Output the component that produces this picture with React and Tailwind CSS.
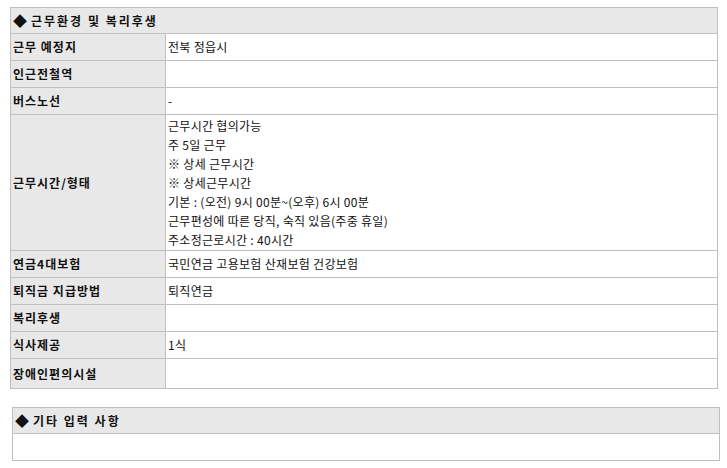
const rows = [
  { label: '근무 예정지', value: '전북 정읍시' },
  { label: '인근전철역', value: '' },
  { label: '버스노선', value: '-' },
  {
    label: '근무시간/형태',
    lines: [
      '근무시간 협의가능',
      '주 5일 근무',
      '※ 상세 근무시간',
      '※ 상세근무시간',
      '기본 : (오전) 9시 00분~(오후) 6시 00분',
      '근무편성에 따른 당직, 숙직 있음(주중 휴일)',
      '주소정근로시간 : 40시간',
    ],
  },
  { label: '연금4대보험', value: '국민연금 고용보험 산재보험 건강보험' },
  { label: '퇴직금 지급방법', value: '퇴직연금' },
  { label: '복리후생', value: '' },
  { label: '식사제공', value: '1식' },
  { label: '장애인편의시설', value: '', tall: true },
];

function Row({ row }) {
  return (
    <div className="flex border-t border-[#c0c0c0]">
      <div
        className={`w-[155px] shrink-0 border-r border-[#c0c0c0] bg-[#e8e8e8] pl-[2px] flex items-center font-bold tracking-[1px] ${
          row.tall ? 'min-h-[29px]' : 'min-h-[26px]'
        }`}
      >
        {row.label}
      </div>
      <div className="flex-1 pl-[2px] flex items-center tracking-[0.3px]">
        {row.lines ? (
          <div className="leading-[19px] py-[1px]">
            {row.lines.map((l, i) => (
              <div key={i}>{l}</div>
            ))}
          </div>
        ) : (
          row.value
        )}
      </div>
    </div>
  );
}

export default function App() {
  return (
    <div
      className="bg-white min-h-[468px] w-[727px] text-[12px] text-[#111] pt-[7px]"
      style={{ fontFamily: '"Noto Sans CJK KR", "Noto Sans", sans-serif' }}
    >
      {/* 근무환경 및 복리후생 */}
      <div className="ml-[10px] w-[708px] border border-[#c0c0c0]">
        <div className="h-[25px] bg-[#e8e8e8] pl-[2px] flex items-center font-bold tracking-[2px]">
          <span className="text-[14px] tracking-[0px] mr-[4px]">◆</span>
          근무환경 및 복리후생
        </div>
        {rows.map((r, i) => (
          <Row key={i} row={r} />
        ))}
      </div>

      {/* 기타 입력 사항 */}
      <div className="ml-[12px] mt-[18px] w-[708px] border border-[#c0c0c0]">
        <div className="h-[26px] bg-[#e8e8e8] pl-[2px] flex items-center font-bold tracking-[2px] border-b border-[#c0c0c0]">
          <span className="text-[14px] tracking-[0px] mr-[4px]">◆</span>
          기타 입력 사항
        </div>
        <div className="h-[26px]"></div>
      </div>
    </div>
  );
}
